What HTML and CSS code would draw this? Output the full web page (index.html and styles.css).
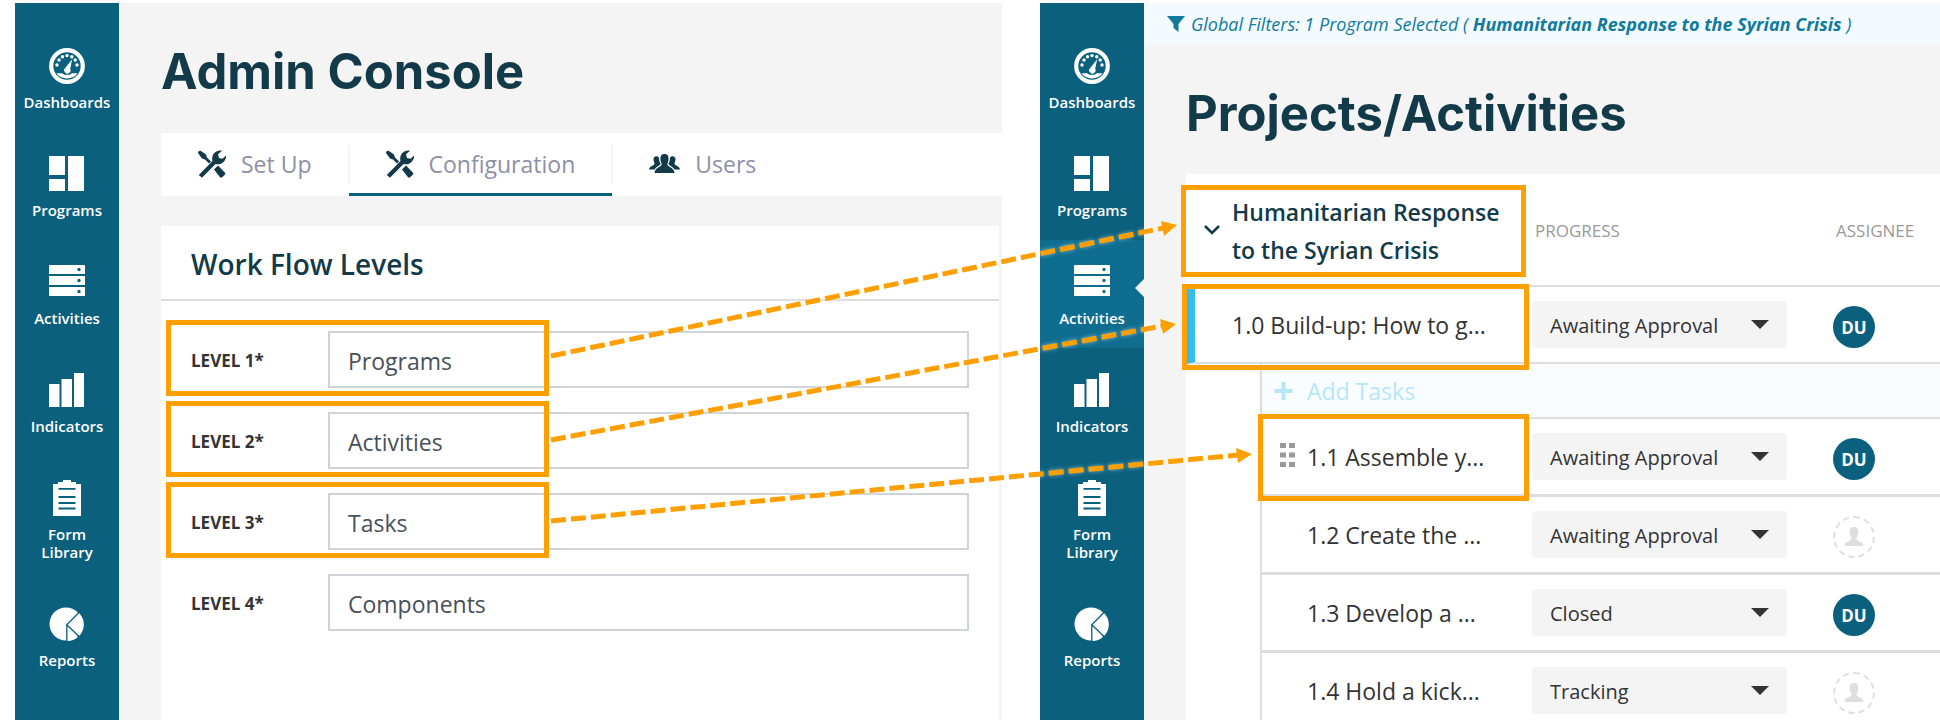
FILE: index.html
```html
<!DOCTYPE html>
<html lang="en">
<head>
<meta charset="utf-8">
<title>Work flow levels</title>
<link rel="stylesheet" href="styles.css">
</head>
<body>
<svg class="defs" aria-hidden="true">
  <symbol id="i-dash" viewBox="0 0 36 36">
    <circle cx="18" cy="18" r="15.8" fill="none" stroke="currentColor" stroke-width="4.2"/>
    <g fill="currentColor"><circle cx="8" cy="17" r="1.7"/><circle cx="10" cy="12" r="1.7"/><circle cx="13.5" cy="8.8" r="1.7"/><circle cx="18" cy="7.6" r="1.7"/><circle cx="22.8" cy="8.8" r="1.7"/><circle cx="26.2" cy="12" r="1.7"/><circle cx="28" cy="17" r="1.7"/>
    <path d="M23.2 11.2l-2 9.6a3.2 3.2 0 1 1-5-.8z"/><path d="M7.5 25.2h5.5l2.5 1.6h5l2.5-1.6h5.500c-2 3.300-6 5.200-10.500 5.200s-8.500-1.900-10.500-5.200z"/></g>
  </symbol>
  <symbol id="i-prog" viewBox="0 0 36 36"><path fill="currentColor" d="M0 0h16v19H0zM19 0h16v35H19zM0 23h16v12H0z"/></symbol>
  <symbol id="i-act" viewBox="0 0 36 36"><path fill="currentColor" fill-rule="evenodd" d="M1 1h34a1 1 0 0 1 1 1v8H0V2a1 1 0 0 1 1-1zM28.300 5.500a1.700 1.700 0 1 0 3.400 0a1.700 1.700 0 1 0-3.400 0zM0 12h36v9H0zM28.300 16.500a1.700 1.700 0 1 0 3.400 0a1.700 1.700 0 1 0-3.400 0zM0 23h36v9H0zM28.300 27.500a1.700 1.700 0 1 0 3.400 0a1.700 1.700 0 1 0-3.400 0z"/></symbol>
  <symbol id="i-ind" viewBox="0 0 36 36"><path fill="currentColor" d="M0 12h10.500v23H0zM12.500 7H23v28H12.500zM25 1h10v34H25z"/></symbol>
  <symbol id="i-form" viewBox="0 0 36 36">
    <path fill="currentColor" d="M4 4h28v32H4z"/>
    <path class="cut" fill="none" stroke-width="2" d="M9.500 17h17M9.500 23h17M9.500 28.500h17M9.500 8.700h17"/>
    <path fill="currentColor" d="M14 0h8v2h5v6H9V2h5z"/>
  </symbol>
  <symbol id="i-rep" viewBox="0 0 36 36">
    <circle cx="17" cy="18" r="16.500" fill="currentColor"/><path fill="currentColor" d="M18 19l12-12a16 16 0 0 1 0 23zM18 19l11 12a16 16 0 0 1-11 4z"/>
    <path class="cut" fill="none" stroke-width="1.300" d="M30.500 6L17.800 18.700 30.500 31M17.800 18.700V36"/>
  </symbol>
  <symbol id="i-tools" viewBox="0 0 28 28">
    <path fill="currentColor" d="M0 3c0-1.500 1.500-2.500 3-2L8 4.500l1 3 4 4-2 2L7 9.500 4 8.500zM16 19.500l4-4 6.800 7c.8 1 .5 1.700 0 2.200l-2.600 2.600c-.8.7-1.700.5-2.200 0zM.8 25L14.500 11C13 5 17.500-.5 24 .8L20 4.300 21 8l3.500.8 3.800-3.500C28 11.500 23 15.500 17.500 14L4 27.800z"/>
  </symbol>
  <symbol id="i-users" viewBox="0 0 31 20">
    <g fill="currentColor"><path d="M11.500 6C11 1.500 13 0 15.500 0S20 1.500 19.500 6c-.2 2-1 3.200-1.300 4 0 3 7.300 3.500 7.300 9h-20c0-5.500 7.300-6 7.300-9-.3-.8-1.100-2-1.300-4z"/>
    <path d="M4.500 6C4.200 3.500 5.500 2.200 7.300 2.200c1.300 0 2.400.6 2.700 1.600.1 3 .6 4.700 1.800 6.200-2.300 2.200-4.500 2.700-6.300 5.500H0c0-3.300 5.500-3.800 5.500-6z"/>
    <path d="M26.500 6c.3-2.500-1-3.800-2.800-3.800-1.300 0-2.400.6-2.700 1.600-.1 3-.6 4.700-1.800 6.200 2.300 2.200 4.500 2.700 6.300 5.500H31c0-3.300-5.500-3.800-5.500-6z"/></g>
  </symbol>
  <symbol id="i-user" viewBox="0 0 20 20"><path fill="currentColor" d="M5.800 6.500C5 2 7 0 10 0s5 2 4.200 6.500c-.2 2-1.200 3.400-1.700 4.500 0 4.500 7 2.500 7 8H.5c0-5.500 7-3.500 7-8-.5-1.100-1.500-2.500-1.700-4.500z"/></symbol>
</svg>

<main class="board">
  <section class="app">
    <nav class="sidebar" aria-label="Admin navigation">
      <a class="nav-item" href="#"><svg class="nav-icon"><use href="#i-dash"/></svg>Dashboards</a>
      <a class="nav-item" href="#"><svg class="nav-icon"><use href="#i-prog"/></svg>Programs</a>
      <a class="nav-item" href="#"><svg class="nav-icon"><use href="#i-act"/></svg>Activities</a>
      <a class="nav-item" href="#"><svg class="nav-icon"><use href="#i-ind"/></svg>Indicators</a>
      <a class="nav-item" href="#"><svg class="nav-icon"><use href="#i-form"/></svg>Form<br>Library</a>
      <a class="nav-item" href="#"><svg class="nav-icon"><use href="#i-rep"/></svg>Reports</a>
    </nav>
    <div class="content">
      <h1 class="title">Admin Console</h1>
      <div class="tabs" role="tablist">
        <button class="tab" role="tab"><svg class="tab-icon"><use href="#i-tools"/></svg>Set Up</button>
        <button class="tab tab-active" role="tab" aria-selected="true"><svg class="tab-icon"><use href="#i-tools"/></svg>Configuration</button>
        <button class="tab" role="tab"><svg class="tab-icon tab-icon-wide"><use href="#i-users"/></svg>Users</button>
      </div>
      <form class="panel">
        <h2 class="panel-title">Work Flow Levels</h2>
        <div class="levels">
          <div class="level"><label class="level-label" for="l1">LEVEL 1*</label><input class="level-input" id="l1" value="Programs"><span class="callout callout-level"></span></div>
          <div class="level"><label class="level-label" for="l2">LEVEL 2*</label><input class="level-input" id="l2" value="Activities"><span class="callout callout-level"></span></div>
          <div class="level"><label class="level-label" for="l3">LEVEL 3*</label><input class="level-input" id="l3" value="Tasks"><span class="callout callout-level"></span></div>
          <div class="level"><label class="level-label" for="l4">LEVEL 4*</label><input class="level-input" id="l4" value="Components"></div>
        </div>
      </form>
    </div>
  </section>

  <section class="app">
    <nav class="sidebar" aria-label="Project navigation">
      <a class="nav-item" href="#"><svg class="nav-icon"><use href="#i-dash"/></svg>Dashboards</a>
      <a class="nav-item" href="#"><svg class="nav-icon"><use href="#i-prog"/></svg>Programs</a>
      <a class="nav-item nav-active" href="#" aria-current="page"><svg class="nav-icon"><use href="#i-act"/></svg>Activities</a>
      <a class="nav-item" href="#"><svg class="nav-icon"><use href="#i-ind"/></svg>Indicators</a>
      <a class="nav-item" href="#"><svg class="nav-icon"><use href="#i-form"/></svg>Form<br>Library</a>
      <a class="nav-item" href="#"><svg class="nav-icon"><use href="#i-rep"/></svg>Reports</a>
    </nav>
    <div class="content">
      <p class="filters"><svg class="filter-icon" viewBox="0 0 18 16"><path fill="currentColor" d="M0 0h18l-6.500 8v8L6.500 12V8z"/></svg><span>Global Filters: 1 Program Selected ( <b>Humanitarian Response to the Syrian Crisis</b> )</span></p>
      <h1 class="title title-projects">Projects/Activities</h1>
      <table class="grid">
        <colgroup><col class="col-indent"><col><col class="col-progress"><col class="col-assignee"></colgroup>
        <thead>
          <tr>
            <th class="program" colspan="2"><div class="program-name"><svg class="chevron" viewBox="0 0 16 10"><path d="M1 1l7 7 7-7" fill="none" stroke="currentColor" stroke-width="2.500"/></svg>Humanitarian Response<br>to the Syrian Crisis</div><span class="callout callout-program"></span></th>
            <th class="col-head">PROGRESS</th>
            <th class="col-head">ASSIGNEE</th>
          </tr>
        </thead>
        <tbody>
          <tr class="activity">
            <td class="activity-name" colspan="2">1.0 Build-up: How to g...<span class="callout callout-activity"></span></td>
            <td><div class="status"><select aria-label="Progress of 1.0"><option>Awaiting Approval</option></select></div></td>
            <td><span class="avatar">DU</span></td>
          </tr>
          <tr class="add">
            <td class="indent"></td>
            <td class="add-cell" colspan="3"><button class="add-button" type="button"><svg class="plus" viewBox="0 0 18 18"><path d="M9 0v18M0 9h18" stroke="currentColor" stroke-width="4"/></svg>Add Tasks</button></td>
          </tr>
          <tr class="task">
            <td class="indent"></td>
            <td class="task-name"><svg class="grip" viewBox="0 0 15 24"><path fill="currentColor" d="M0 0h6v5H0zM9 0h6v5H9zM0 9.500h6v5H0zM9 9.500h6v5H9zM0 19h6v5H0zM9 19h6v5H9z"/></svg>1.1 Assemble y...<span class="callout callout-task"></span></td>
            <td><div class="status"><select aria-label="Progress of 1.1"><option>Awaiting Approval</option></select></div></td>
            <td><span class="avatar">DU</span></td>
          </tr>
          <tr class="task">
            <td class="indent"></td>
            <td class="task-name">1.2 Create the ...</td>
            <td><div class="status"><select aria-label="Progress of 1.2"><option>Awaiting Approval</option></select></div></td>
            <td><span class="avatar avatar-empty"><svg class="person"><use href="#i-user"/></svg></span></td>
          </tr>
          <tr class="task">
            <td class="indent"></td>
            <td class="task-name">1.3 Develop a ...</td>
            <td><div class="status"><select aria-label="Progress of 1.3"><option>Closed</option></select></div></td>
            <td><span class="avatar">DU</span></td>
          </tr>
          <tr class="task">
            <td class="indent"></td>
            <td class="task-name">1.4 Hold a kick...</td>
            <td><div class="status"><select aria-label="Progress of 1.4"><option>Tracking</option></select></div></td>
            <td><span class="avatar avatar-empty"><svg class="person"><use href="#i-user"/></svg></span></td>
          </tr>
        </tbody>
      </table>
    </div>
  </section>

  <svg class="arrows" viewBox="0 0 1940 720" aria-hidden="true">
    <g fill="none" stroke="#ffa000" stroke-width="5" stroke-dasharray="15 5">
      <path d="M551 356L1163 228"/><path d="M551 440L1162 326"/><path d="M551 521L1238 455"/>
    </g>
    <g fill="#ffa000">
      <path d="M1161 221l16 4-13 11z"/><path d="M1160 319l16 5-13 10z"/><path d="M1236 448l16 6-14 9z"/>
    </g>
  </svg>
</main>
</body>
</html>
```
FILE: styles.css
```css
* { box-sizing: border-box; }

body {
  margin: 0;
  background: #fff;
  color: #333;
  font-family: "Open Sans", "Noto Sans", sans-serif;
  font-size: 23px;
  overflow: hidden;
}

.defs { position: absolute; width: 0; height: 0; }
.cut { stroke: #0b607d; }

.board {
  position: relative;
  display: grid;
  grid-template-columns: 987fr 900fr;
  gap: 38px;
  height: 100vh;
  padding: 3px 0 0 15px;
  overflow: hidden;
}

.app { display: flex; min-width: 0; background: #f4f4f4; }

/* Sidebar */
.sidebar {
  flex: 0 0 104px;
  padding-top: 21px;
  background: #0b607d;
}
.nav-item {
  position: relative;
  display: flex;
  flex-direction: column;
  align-items: center;
  padding: 24px 0 21px;
  color: #fff;
  font-size: 15px;
  font-weight: 600;
  line-height: 18px;
  text-align: center;
  text-decoration: none;
}
.nav-icon { width: 36px; height: 36px; margin-bottom: 9px; }
.nav-active { background: #0f6e90; }
.nav-active::after {
  content: "";
  position: absolute;
  top: 39px;
  right: 0;
  border: 9px solid transparent;
  border-left: 0;
  border-right-color: #f4f4f4;
}

.content { flex: 1; min-width: 0; display: flex; flex-direction: column; }

.title {
  margin: 0;
  padding: 39px 0 31px 42px;
  color: #123a49;
  font-family: Inter, "Open Sans", sans-serif;
  font-size: 49px;
  font-weight: 700;
  line-height: 60px;
}

/* Tabs */
.tabs { display: flex; margin-left: 42px; background: #fff; }
.tab {
  position: relative;
  display: flex;
  align-items: center;
  gap: 15px;
  height: 63px;
  padding: 2px 37px 0;
  border: 0;
  border-bottom: 3px solid transparent;
  background: none;
  color: #8e90a6;
  font-family: inherit;
  font-size: 23px;
}
.tab + .tab::before {
  content: "";
  position: absolute;
  top: 12px;
  left: -1px;
  height: 39px;
  border-left: 2px solid #f4f4f4;
}
.tab-active { border-bottom-color: #0b607d; }
.tab-icon { width: 28px; height: 28px; color: #123a49; }
.tab-icon-wide { width: 31px; height: 20px; }

/* Work flow levels */
.panel { flex: 1; margin: 30px 3px 0 42px; background: #fff; }
.panel-title {
  margin: 0;
  padding: 20px 30px 16px;
  border-bottom: 2px solid #dedede;
  color: #123a49;
  font-size: 28px;
  font-weight: 600;
  line-height: 37px;
}
.levels { display: flex; flex-direction: column; gap: 24px; padding: 30px 30px 0; }
.level { position: relative; display: flex; align-items: center; }
.level-label { flex: 0 0 137px; padding-top: 2px; font-size: 17px; font-weight: 700; }
.level-input {
  flex: 1;
  min-width: 0;
  height: 57px;
  padding: 2px 18px 0;
  border: 2px solid #ced4da;
  background: #fff;
  color: #495057;
  font-family: inherit;
  font-size: 23px;
}

/* Highlight frames */
.callout { position: absolute; z-index: 1; border: 5px solid #ffa000; pointer-events: none; }
.callout-level { top: -11px; bottom: -8px; left: -25px; width: 383px; }
.callout-program { top: 11px; right: 6px; bottom: 8px; left: -5px; }
.callout-activity { top: -3px; right: 3px; bottom: -8px; left: -13px; }
.callout-task { top: -5px; right: 3px; bottom: -7px; left: -4px; }

/* Projects */
.filters {
  display: flex;
  align-items: center;
  gap: 6px;
  height: 42px;
  margin: 0;
  padding-left: 23px;
  background: #f3fbff;
  color: #117a9d;
  font-size: 18px;
  font-style: italic;
  white-space: nowrap;
}
.filters b { font-weight: 700; }
.filter-icon { width: 18px; height: 16px; }
.title-projects { padding-bottom: 30px; }

.grid {
  width: calc(100% - 42px);
  margin-left: 42px;
  border-spacing: 0;
  table-layout: fixed;
  background: #fff;
}
.col-indent { width: 74px; }
.col-progress { width: 301px; }
.col-assignee { width: 107px; }
.grid th, .grid td { position: relative; padding: 0; text-align: left; white-space: nowrap; }
.grid th { height: 113px; border-bottom: 2px solid #dedede; }
.program-name {
  padding: 2px 0 0 46px;
  color: #123a49;
  font-size: 23px;
  font-weight: 600;
  line-height: 38px;
}
.chevron { position: absolute; top: 51px; left: 18px; width: 16px; height: 10px; }
.grid .col-head { padding: 2px 3px 0; color: #999; font-size: 17px; font-weight: 400; }

.activity td { height: 77px; border-bottom: 2px solid #dedede; }
.grid .activity-name { padding-left: 37px; border-left: 9px solid #34bdec; }
.add-cell { height: 55px; border-bottom: 2px solid #dedede; border-left: 2px solid #dedede; background: #f9fdff; }
.add-button {
  display: flex;
  align-items: center;
  gap: 14px;
  padding: 0 12px;
  border: 0;
  background: none;
  color: #b5e7f9;
  font-family: inherit;
  font-size: 23px;
}
.plus { width: 19px; height: 18px; }
.task td { height: 78px; border-bottom: 3px solid #dedede; }
.task .indent { border-bottom: 0; }
.grid .task-name { padding-left: 45px; border-left: 2px solid #dedede; }
.grip { position: absolute; top: 24px; left: 18px; width: 15px; height: 24px; color: #999; }

.status { position: relative; width: 255px; }
.status select {
  display: block;
  width: 100%;
  height: 47px;
  padding: 2px 18px 0;
  border: 0;
  border-radius: 4px;
  appearance: none;
  background: #f4f4f4;
  color: #333;
  font-family: inherit;
  font-size: 20px;
}
.status::after {
  content: "";
  position: absolute;
  top: 19px;
  right: 18px;
  border: 9px solid transparent;
  border-top-color: #333;
  border-bottom: 0;
  pointer-events: none;
}
.avatar {
  display: flex;
  align-items: center;
  justify-content: center;
  width: 42px;
  height: 42px;
  margin-top: 5px;
  border-radius: 50%;
  background: #0b607d;
  color: #fff;
  font-size: 17px;
  font-weight: 700;
}
.avatar-empty { border: 2px dashed #dedede; background: none; color: #dedede; }
.person { width: 20px; height: 20px; }

.arrows {
  position: absolute;
  inset: 0;
  width: 100%;
  height: 100%;
  filter: drop-shadow(0 0 2px #ffffff80);
  pointer-events: none;
}
```
